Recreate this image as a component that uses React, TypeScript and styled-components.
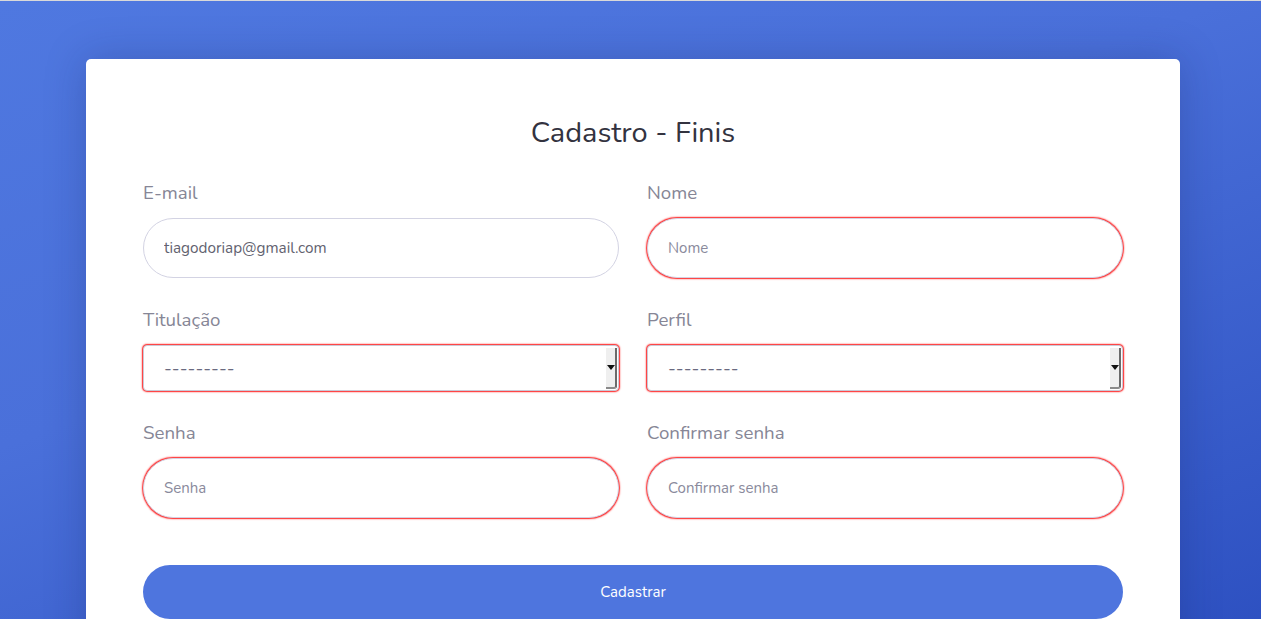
import styled, { createGlobalStyle } from 'styled-components';

const GlobalStyle = createGlobalStyle`
  * {
    box-sizing: border-box;
  }
  body {
    margin: 0;
    font-family: Nunito, Lato, 'Open Sans', sans-serif;
  }
`;

const Page = styled.div`
  min-height: 100vh;
  border-top: 1px solid #d9d9d9;
  padding: 58px 81px 0 86px;
  background: linear-gradient(160deg, #4f78e0 0%, #4a70da 40%, #2c4fc0 100%);
  overflow: hidden;
`;

const Card = styled.div`
  background: #fff;
  border-radius: 5px;
  box-shadow: 0 0 40px rgba(20, 30, 90, 0.25);
  padding: 54px 57px 0;
  height: 600px;
`;

const Title = styled.h1`
  margin: 0 0 28px;
  text-align: center;
  font-size: 29px;
  line-height: 40px;
  font-weight: 400;
  color: #33333f;
`;

const Grid = styled.div`
  display: grid;
  grid-template-columns: 1fr 1fr;
  column-gap: 28px;
  row-gap: 30px;
`;

const Field = styled.div`
  display: flex;
  flex-direction: column;
`;

const Label = styled.label`
  font-size: 18.7px;
  line-height: 25px;
  color: #868696;
  margin-bottom: 12px;
`;

const TextInput = styled.input<{ $invalid?: boolean }>`
  height: 60px;
  border-radius: 30px;
  border: 1px solid #d3d3e3;
  padding: 0 20px;
  font-family: inherit;
  font-size: 15.3px;
  color: #62626f;
  outline: none;
  box-shadow: ${(p) => (p.$invalid ? '0 0 1.5px 1px #ff1a1a' : 'none')};

  &::placeholder {
    color: #8a8a9c;
    font-size: 15px;
  }
`;

const SelectWrap = styled.div`
  position: relative;
  height: 46px;
`;

const Select = styled.select`
  appearance: none;
  width: 100%;
  height: 100%;
  border: 1px solid #c9c9d6;
  border-radius: 4px;
  background: #fff;
  padding: 0 20px;
  font-family: inherit;
  font-size: 18.5px;
  color: #6a6a80;
  outline: none;
  box-shadow: 0 0 1.5px 1px #ff1a1a;
`;

const Arrow = styled.span`
  position: absolute;
  top: 3px;
  right: 2px;
  bottom: 2px;
  width: 11px;
  background: #efefef;
  border-right: 2px solid #6a6a6a;
  border-bottom: 2px solid #8a8a8a;
  border-radius: 0 0 3px 0;
  display: flex;
  align-items: center;
  justify-content: center;
  pointer-events: none;

  &::after {
    content: '';
    border-left: 4px solid transparent;
    border-right: 4px solid transparent;
    border-top: 5px solid #111;
  }
`;

const SubmitButton = styled.button`
  margin-top: 47px;
  width: 100%;
  height: 54px;
  border: none;
  border-radius: 27px;
  background: #4e75de;
  color: #fff;
  font-family: inherit;
  font-size: 15px;
  cursor: pointer;
`;

export default function App() {
  return (
    <Page>
      <GlobalStyle />
      <Card>
        <Title>Cadastro - Finis</Title>
        <Grid>
          <Field>
            <Label>E-mail</Label>
            <TextInput defaultValue="tiagodoriap@gmail.com" />
          </Field>
          <Field>
            <Label>Nome</Label>
            <TextInput $invalid placeholder="Nome" />
          </Field>
          <Field>
            <Label>Titulação</Label>
            <SelectWrap>
              <Select>
                <option>---------</option>
              </Select>
              <Arrow />
            </SelectWrap>
          </Field>
          <Field>
            <Label>Perfil</Label>
            <SelectWrap>
              <Select>
                <option>---------</option>
              </Select>
              <Arrow />
            </SelectWrap>
          </Field>
          <Field>
            <Label>Senha</Label>
            <TextInput $invalid type="password" placeholder="Senha" />
          </Field>
          <Field>
            <Label>Confirmar senha</Label>
            <TextInput $invalid type="password" placeholder="Confirmar senha" />
          </Field>
        </Grid>
        <SubmitButton>Cadastrar</SubmitButton>
      </Card>
    </Page>
  );
}
